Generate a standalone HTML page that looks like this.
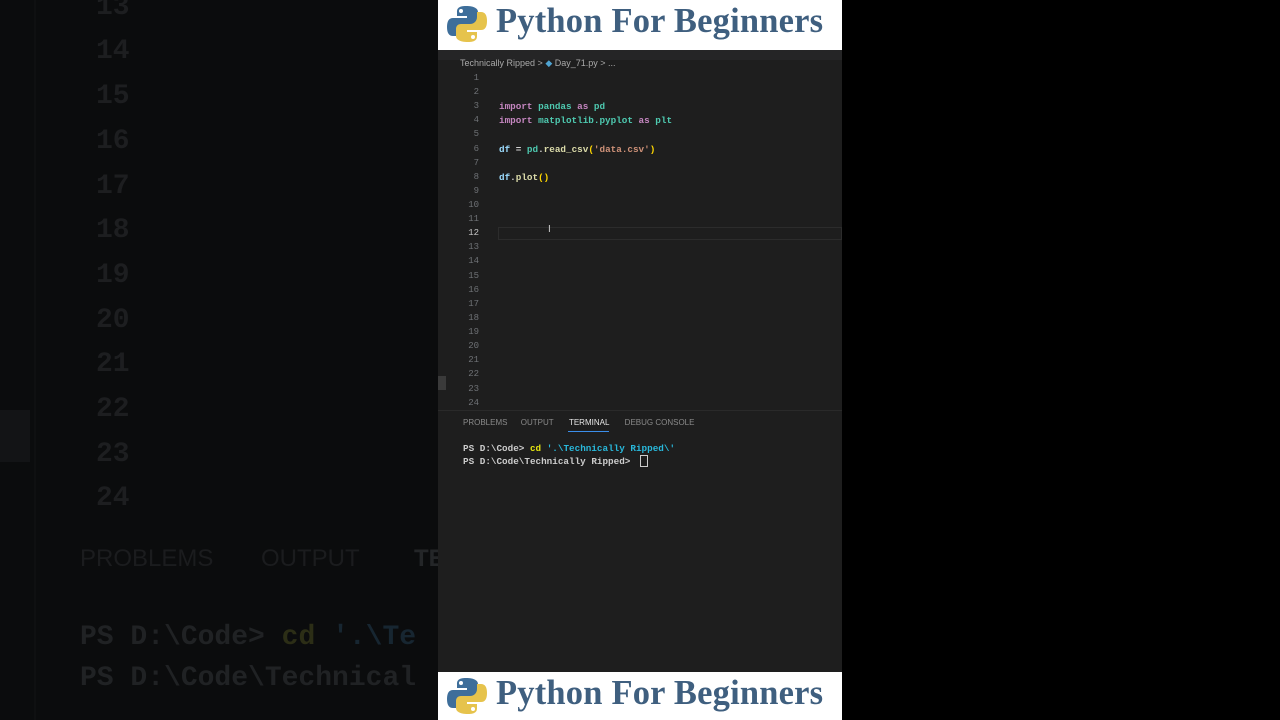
<!DOCTYPE html>
<html><head><meta charset="utf-8"><style>
body{margin:0;width:1280px;height:720px;background:#000;overflow:hidden;position:relative;font-family:"Liberation Sans",sans-serif}
.abs{position:absolute}
.mono{font-family:"Liberation Mono","DejaVu Sans Mono",monospace}
.left{left:0;top:0;width:438px;height:720px;background:#0b0c0d}
.ln{position:absolute;left:96px;font-size:28px;color:#1d1e20;font-weight:bold}
.banner{left:438px;width:404px;height:50px;background:#fff}
.banner span{position:absolute;left:58px;top:2px;font-family:"Liberation Serif",serif;font-weight:bold;font-size:34.5px;color:#3f5f7f;letter-spacing:0.2px}
.ed{left:438px;top:50px;width:404px;height:622px;background:#1e1e1e}
.n{position:absolute;width:41px;text-align:right;font-size:9px;color:#6e7175;left:0}
.c{position:absolute;left:61px;font-size:9.3px;color:#d4d4d4;white-space:pre;font-weight:bold}
.k{color:#c586c0}.m{color:#4ec9b0}.s{color:#ce9178}.f{color:#dcdcaa}.v{color:#9cdcfe}
</style></head><body>
<div class="abs left">
<div class="abs" style="left:0;top:410px;width:30px;height:52px;background:#131416"></div>
<div class="abs" style="left:34px;top:0;width:2px;height:720px;background:#0f1011"></div>
<div class="ln mono" style="top:-8px">13</div>
<div class="ln mono" style="top:36px">14</div>
<div class="ln mono" style="top:81px">15</div>
<div class="ln mono" style="top:126px">16</div>
<div class="ln mono" style="top:171px">17</div>
<div class="ln mono" style="top:215px">18</div>
<div class="ln mono" style="top:260px">19</div>
<div class="ln mono" style="top:305px">20</div>
<div class="ln mono" style="top:349px">21</div>
<div class="ln mono" style="top:394px">22</div>
<div class="ln mono" style="top:439px">23</div>
<div class="ln mono" style="top:483px">24</div>
<div class="abs" style="left:80px;top:545px;font-size:24px;color:#1b1c1e">PROBLEMS</div>
<div class="abs" style="left:261px;top:545px;font-size:24px;color:#1b1c1e">OUTPUT</div>
<div class="abs" style="left:414px;top:545px;font-size:24px;color:#242628;font-weight:bold">TE</div>
<div class="abs mono" style="left:80px;top:622px;font-size:28px;color:#202224;font-weight:bold;white-space:pre">PS D:\Code&gt; <span style="color:#2c2e16">cd</span> <span style="color:#172631">'.\Te</span></div>
<div class="abs mono" style="left:80px;top:663px;font-size:28px;color:#202224;font-weight:bold;white-space:pre">PS D:\Code\Technical</div>
</div>
<div class="abs banner" style="top:0">
<svg class="abs" style="left:9px;top:4px" width="40" height="40" viewBox="0 0 40 40"><path d="M19 2c-8 0-9 3-9 6v4h10v2H6c-4 0-6 3-6 9s2 9 6 9h4v-5c0-4 3-7 7-7h9c3 0 5-2 5-5V8c0-3-3-6-12-6z" fill="#3e6e9a"/><circle cx="14" cy="7" r="2" fill="#fff"/><path d="M21 38c8 0 9-3 9-6v-4H20v-2h14c4 0 6-3 6-9s-2-9-6-9h-4v5c0 4-3 7-7 7h-9c-3 0-5 2-5 5v7c0 3 3 6 12 6z" fill="#e6c34c"/><circle cx="26" cy="33" r="2" fill="#fff"/></svg>
<span>Python For Beginners</span></div>
<div class="abs ed">
<div class="abs" style="left:0;top:0;width:404px;height:10px;background:#252526"></div>
<div class="abs" style="left:22px;top:8px;font-size:9px;color:#a9a9a9">Technically Ripped &gt; <span style="color:#4fa3d1">◆</span> Day_71.py &gt; ...</div>
<div class="abs" style="left:0;top:326px;width:8px;height:14px;background:#3a3a3a"></div>
<div class="abs" style="left:60px;top:177px;width:344px;height:13px;border:1px solid #2c2c2c;box-sizing:border-box"></div>
<div class="abs" style="left:110px;top:174px;font-size:10px;color:#ccc">I</div>
<div class="mono">
<div class="n" style="top:23px">1</div><div class="n" style="top:37px">2</div><div class="n" style="top:51px">3</div><div class="n" style="top:65px">4</div><div class="n" style="top:79px">5</div><div class="n" style="top:94px">6</div><div class="n" style="top:108px">7</div><div class="n" style="top:122px">8</div><div class="n" style="top:136px">9</div><div class="n" style="top:150px">10</div><div class="n" style="top:164px">11</div><div class="n" style="top:178px;color:#c6c6c6">12</div><div class="n" style="top:192px">13</div><div class="n" style="top:206px">14</div><div class="n" style="top:221px">15</div><div class="n" style="top:235px">16</div><div class="n" style="top:249px">17</div><div class="n" style="top:263px">18</div><div class="n" style="top:277px">19</div><div class="n" style="top:291px">20</div><div class="n" style="top:305px">21</div><div class="n" style="top:319px">22</div><div class="n" style="top:334px">23</div><div class="n" style="top:348px">24</div>
<div class="c" style="top:51px"><span class="k">import</span> <span class="m">pandas</span> <span class="k">as</span> <span class="m">pd</span></div>
<div class="c" style="top:65px"><span class="k">import</span> <span class="m">matplotlib.pyplot</span> <span class="k">as</span> <span class="m">plt</span></div>
<div class="c" style="top:94px"><span class="v">df</span> = <span class="m">pd</span>.<span class="f">read_csv</span><span style="color:#ffd700">(</span><span class="s">'data.csv'</span><span style="color:#ffd700">)</span></div>
<div class="c" style="top:122px"><span class="v">df</span>.<span class="f">plot</span><span style="color:#ffd700">()</span></div>
</div>
<div class="abs" style="left:0;top:360px;width:404px;height:262px;background:#1e1e1e;border-top:1px solid #2a2a2a"></div>
<div class="abs" style="left:25px;top:368px;font-size:8px;color:#8a8a8a;white-space:pre">PROBLEMS      OUTPUT       <span style="color:#e7e7e7">TERMINAL</span>       DEBUG CONSOLE</div>
<div class="abs" style="left:130px;top:381px;width:41px;height:1px;background:#3b8eea"></div>
<div class="abs mono" style="left:25px;top:393px;font-size:9.3px;color:#ccc;font-weight:bold;white-space:pre">PS D:\Code&gt; <span style="color:#e5e510">cd</span> <span style="color:#29b8db">'.\Technically Ripped\'</span></div>
<div class="abs mono" style="left:25px;top:406px;font-size:9.3px;color:#ccc;font-weight:bold;white-space:pre">PS D:\Code\Technically Ripped&gt; </div>
<div class="abs" style="left:202px;top:405px;width:6px;height:10px;border:1px solid #ccc"></div>
</div>
<div class="abs banner" style="top:672px;height:48px">
<svg class="abs" style="left:9px;top:4px" width="40" height="40" viewBox="0 0 40 40"><path d="M19 2c-8 0-9 3-9 6v4h10v2H6c-4 0-6 3-6 9s2 9 6 9h4v-5c0-4 3-7 7-7h9c3 0 5-2 5-5V8c0-3-3-6-12-6z" fill="#3e6e9a"/><circle cx="14" cy="7" r="2" fill="#fff"/><path d="M21 38c8 0 9-3 9-6v-4H20v-2h14c4 0 6-3 6-9s-2-9-6-9h-4v5c0 4-3 7-7 7h-9c-3 0-5 2-5 5v7c0 3 3 6 12 6z" fill="#e6c34c"/><circle cx="26" cy="33" r="2" fill="#fff"/></svg>
<span>Python For Beginners</span></div>
</body></html>
